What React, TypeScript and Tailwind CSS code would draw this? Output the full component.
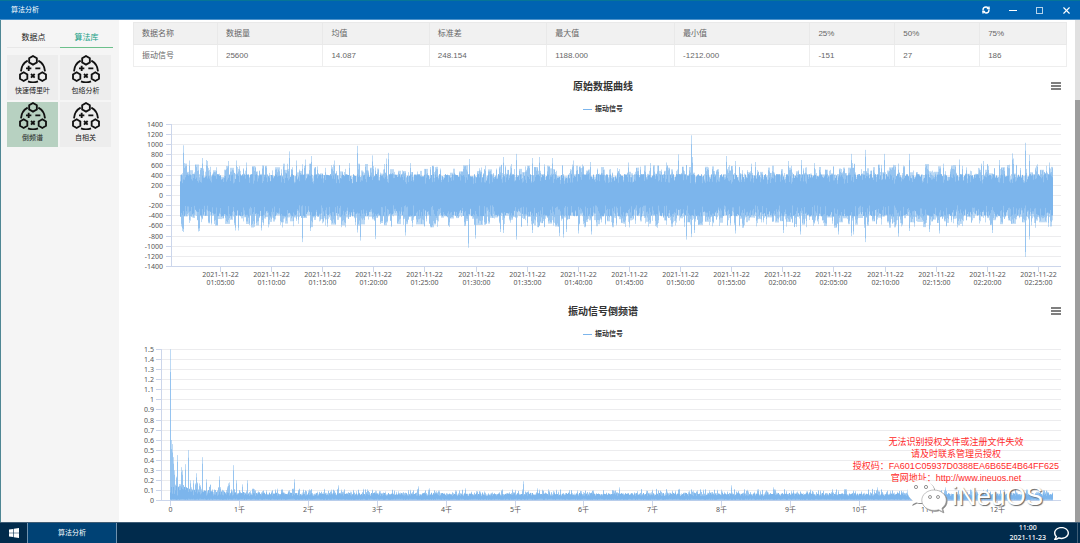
import { RefreshCw, X } from "lucide-react";
import { FaRegComment } from "react-icons/fa";

const tools = ["快速傅里叶", "包络分析", "倒频谱", "自相关"];

const stats = [
  { label: "数据名称", value: "振动信号", width: "w-[9%]" },
  { label: "数据量", value: "25600", width: "w-[11.3%]" },
  { label: "均值", value: "14.087", width: "w-[11.4%]" },
  { label: "标准差", value: "248.154", width: "w-[12.6%]" },
  { label: "最大值", value: "1188.000", width: "w-[13.7%]" },
  { label: "最小值", value: "-1212.000", width: "w-[14.5%]" },
  { label: "25%", value: "-151", width: "w-[9.1%]" },
  { label: "50%", value: "27", width: "w-[9.1%]" },
  { label: "75%", value: "186", width: "w-[9.3%]" },
];

type Peak = [number, number];

// x offset inside the plot, value
const highPeaks: Peak[] = [
  [50, 990], [51, 640], [56, 690], [69, 740], [73, 700], [74, 680], [95, 680], [103, 690], [113, 650],
  [156, 870], [163, 690], [172, 710], [178, 780], [201, 690], [216, 640], [224, 980], [239, 790],
  [253, 730], [255, 840], [277, 640], [336, 720], [370, 760], [383, 820], [399, 740], [406, 760],
  [419, 740], [440, 690], [457, 660], [495, 650], [517, 640], [533, 650], [545, 810], [558, 1188],
  [559, 760], [593, 780], [602, 680], [622, 660], [655, 680], [668, 700], [681, 640], [718, 820],
  [719, 640], [732, 900], [751, 820], [776, 820], [826, 710], [850, 680], [866, 700], [879, 830],
  [880, 730], [892, 1040], [896, 800], [916, 650],
];

const lowPeaks: Peak[] = [
  [49, -700], [50, -720], [65, -710], [66, -700], [102, -690], [105, -690], [128, -690], [169, -920],
  [177, -700], [224, -730], [227, -890], [242, -860], [272, -790], [335, -1030], [342, -850],
  [367, -720], [370, -740], [383, -870], [399, -740], [426, -800], [430, -830], [433, -720],
  [445, -750], [458, -770], [553, -870], [558, -820], [561, -740], [602, -750], [650, -740],
  [667, -770], [705, -770], [718, -800], [720, -770], [732, -920], [765, -810], [776, -700],
  [796, -720], [806, -750], [859, -740], [892, -1212], [896, -870],
];

const cepstrumPeaks: Peak[] = [
  [37, 1.5], [38, 0.6], [39, 0.56], [40, 0.43], [41, 0.3], [44, 0.45], [48, 0.33], [49, 0.3],
  [52, 0.36], [55, 0.5], [57, 0.2], [60, 0.2], [63, 0.27], [66, 0.17], [69, 0.43], [73, 0.21],
  [86, 0.24], [95, 0.17], [96, 0.18], [100, 0.35], [103, 0.2], [109, 0.16], [114, 0.2], [161, 0.21],
  [205, 0.15], [285, 0.14], [296, 0.12], [332, 0.12], [390, 0.19], [404, 0.12], [486, 0.13],
  [598, 0.15], [640, 0.13], [744, 0.13], [812, 0.13],
];

function createRandom(seed: number) {
  let s = seed;
  return () => {
    s = (s * 1664525 + 1013904223) % 4294967296;
    return s / 4294967296;
  };
}

function buildSignal() {
  const rand = createRandom(25600);
  const y = (v: number) => (79.5 - v * 0.0507).toFixed(1);
  const up = new Map(highPeaks);
  const down = new Map(lowPeaks);
  let outer = "";
  let middle = "";
  let core = "";
  let top = 450;
  let bottom = -450;
  for (let x = 47; x < 920; x++) {
    // neighbouring columns share an extreme now and then, so the edge comes out in clumps
    if (rand() < 0.65) top = 370 + Math.pow(rand(), 1.6) * 260;
    if (rand() < 0.65) bottom = -390 - Math.pow(rand(), 1.6) * 250;
    const hi = up.get(x);
    const lo = down.get(x);
    outer += `M${x + 0.5} ${y(hi ?? top)}V${y(lo ?? bottom)}`;
    middle += `M${x + 0.5} ${y(hi ? hi * 0.85 : top - rand() * 130)}V${y(lo ? lo * 0.92 : bottom + rand() * 130)}`;
    core += `M${x + 0.5} ${y(420 - Math.pow(rand(), 2) * 190)}V${y(-410 + Math.pow(rand(), 2) * 220)}`;
  }
  return { outer, middle, core };
}

function buildCepstrum() {
  const rand = createRandom(77);
  const y = (v: number) => (159.5 - v * 100.8).toFixed(1);
  const peaks = new Map(cepstrumPeaks);
  let outer = "";
  let middle = "";
  let core = "";
  for (let x = 37; x < 920; x++) {
    const decay = Math.exp(-(x - 37) / 32);
    const top = 0.06 + 0.1 * decay + Math.pow(rand(), 2.5) * (0.055 + 0.07 * decay);
    const peak = peaks.get(x);
    outer += `M${x + 0.5} ${y(peak ?? top)}V${y(0)}`;
    middle += `M${x + 0.5} ${y(peak ? peak * 0.85 : top - rand() * 0.02)}V${y(0.005)}`;
    core += `M${x + 0.5} ${y(0.045 + (0.03 + 0.1 * decay) * rand())}V${y(0.008 + rand() * 0.01)}`;
  }
  return { outer, middle, core };
}

const signal = buildSignal();
const cepstrum = buildCepstrum();

function ToolIcon() {
  return (
    <svg viewBox="0 0 84 84" className="size-7" fill="none" stroke="#111" strokeWidth="5.500">
      <path d="M42 3 53.500 9.500v13L42 29 30.500 22.500v-13z" />
      <path d="M14 52 25 58.500v13L14 78 3 71.500v-13z" />
      <path d="M70 52 81 58.500v13L70 78 59 71.500v-13z" />
      <path d="M26 17C13 24 7 35 6 49M58 17c13 7 19 18 20 32M27 79c10 4 20 4 30 0" />
      <path d="M21 40h16M29 32v16M49 40h15M36 57l11 11M47 57 36 68" />
    </svg>
  );
}

function WaveLayers({ data }: { data: { outer: string; middle: string; core: string } }) {
  return (
    <g stroke="#7cb5ec" fill="none">
      <path d={data.outer} strokeOpacity="0.5" />
      <path d={data.middle} strokeOpacity="0.6" />
      <path d={data.core} />
    </g>
  );
}

function ChartHeader({ title }: { title: string }) {
  return (
    <>
      <div className="grid grid-cols-[1fr_auto_1fr] items-center h-8 pr-3">
        <h2 className="col-start-2 pl-3 text-[10px] leading-4 font-bold text-[#333]">{title}</h2>
        <button type="button" aria-label="图表菜单" className="justify-self-end">
          <svg viewBox="0 0 10 8" className="w-[10px] h-2" stroke="#555" strokeWidth="1.600">
            <path d="M0 1h10M0 4h10M0 7h10" />
          </svg>
        </button>
      </div>
      <div className="flex justify-center h-[14px]">
        <button type="button" className="flex items-center gap-[3px] text-[7px] leading-3 font-bold text-[#333]">
          <span className="w-[9px] h-px bg-[#7cb5ec]" />
          振动信号
        </button>
      </div>
    </>
  );
}

function SignalChart() {
  const rows = Array.from({ length: 15 }, (_, i) => 1400 - i * 200);
  const times = Array.from({ length: 17 }, (_, i) => {
    const total = 65 + i * 5;
    return `0${Math.floor(total / 60)}:${String(total % 60).padStart(2, "0")}:00`;
  });
  return (
    <section>
      <ChartHeader title="原始数据曲线" />
      <svg viewBox="0 0 940 179" className="block w-full" fontSize="7" fill="#555">
        {rows.map((v, i) => {
          const y = Math.round(8 + i * 10.14) + 0.5;
          return (
            <g key={v}>
              <path d={`M38 ${y}H928`} stroke="#ececee" />
              <path d={`M33 ${y}h5`} stroke="#ccd6eb" />
              <text x="30" y={y + 2.5} textAnchor="end">{v}</text>
            </g>
          );
        })}
        <path d="M38.500 8v143M38 150.500H928" stroke="#ccd6eb" fill="none" />
        <WaveLayers data={signal} />
        {times.map((t, i) => {
          const x = Math.round(87 + i * 51.12) + 0.5;
          return (
            <g key={t} textAnchor="middle">
              <path d={`M${x} 151v5`} stroke="#ccd6eb" />
              <text x={x} y="161">2021-11-22</text>
              <text x={x} y="169">{t}</text>
            </g>
          );
        })}
      </svg>
    </section>
  );
}

function CepstrumChart() {
  const rows = Array.from({ length: 16 }, (_, i) => (15 - i) / 10);
  const ticks = Array.from({ length: 13 }, (_, i) => (i === 0 ? "0" : `${i}千`));
  return (
    <section>
      <ChartHeader title="振动信号倒频谱" />
      <svg viewBox="0 0 940 179" className="block w-full" fontSize="7" fill="#555">
        {rows.map((v, i) => {
          const y = Math.round(8 + i * 10.08) + 0.5;
          return (
            <g key={v}>
              <path d={`M28 ${y}H928`} stroke="#ececee" />
              <path d={`M23 ${y}h5`} stroke="#ccd6eb" />
              <text x="21" y={y + 2.5} textAnchor="end">{v}</text>
            </g>
          );
        })}
        <path d="M28.500 8v152M28 159.500H928" stroke="#ccd6eb" fill="none" />
        <WaveLayers data={cepstrum} />
        {ticks.map((t, i) => {
          const x = Math.round(37 + i * 68.9) + 0.5;
          return (
            <g key={t} textAnchor="middle">
              <path d={`M${x} 160v5`} stroke="#ccd6eb" />
              <text x={x} y="171">{t}</text>
            </g>
          );
        })}
      </svg>
    </section>
  );
}

function StatsTable() {
  return (
    <table className="w-full table-fixed border-collapse text-[8px] leading-3 text-[#666]">
      <thead>
        <tr className="bg-[#f1f1f1]">
          {stats.map((s) => (
            <th key={s.label} className={`${s.width} h-[22px] px-2 text-left font-normal border border-[#e9e9e9]`}>
              {s.label}
            </th>
          ))}
        </tr>
      </thead>
      <tbody>
        <tr>
          {stats.map((s) => (
            <td key={s.label} className="h-[22px] px-2 border border-[#eee]">{s.value}</td>
          ))}
        </tr>
      </tbody>
    </table>
  );
}

function TitleBar() {
  return (
    <header className="flex items-center justify-between h-5 shrink-0 pl-[11px] bg-[#0063b1] border-t border-t-[#067596] border-b border-b-[#4d92ca] text-white">
      <h1 className="text-[7px] leading-3">算法分析</h1>
      <div className="flex">
        <button type="button" aria-label="刷新" className="flex justify-center items-center w-[27px] h-4">
          <RefreshCw className="size-2" strokeWidth={4} />
        </button>
        <button type="button" aria-label="最小化" className="flex justify-center items-center w-[27px] h-4">
          <span className="w-2 h-px bg-white" />
        </button>
        <button type="button" aria-label="最大化" className="flex justify-center items-center w-[27px] h-4">
          <span className="size-[7px] border border-[#b5d3ea]" />
        </button>
        <button type="button" aria-label="关闭" className="flex justify-center items-center w-[27px] h-4">
          <X className="size-[11px]" strokeWidth={2.5} />
        </button>
      </div>
    </header>
  );
}

function Sidebar() {
  return (
    <aside className="w-[118px] shrink-0 pl-[6px] pr-[6px] pt-2 bg-[#f5f5f5]">
      <div className="grid grid-cols-2 text-[8px] leading-4">
        <button type="button" className="h-5 text-[#222] border-b border-[#e8e8e8]">数据点</button>
        <button type="button" className="h-5 text-[#16a085] border-b border-[#6cc08b]">算法库</button>
      </div>
      <div className="grid grid-cols-[51px_51px] gap-[2px] pt-[7px]">
        {tools.map((name) => (
          <button
            key={name}
            type="button"
            className={`flex flex-col items-center h-[45px] text-[7px] leading-4 text-[#222] ${
              name === "倒频谱" ? "bg-[#b7d1c1]" : "bg-[#ededed]"
            }`}
          >
            <ToolIcon />
            {name}
          </button>
        ))}
      </div>
    </aside>
  );
}

function LicenseNotice() {
  return (
    <div className="absolute right-4 bottom-[38px] text-center text-[9px] leading-3 text-[#ff2a2a]">
      <p>无法识别授权文件或注册文件失效</p>
      <p>请及时联系管理员授权</p>
      <p>授权码：FA601C05937D0388EA6B65E4B64FF625</p>
      <p>官网地址：<a href="http://www.ineuos.net">http://www.ineuos.net</a></p>
    </div>
  );
}

function Watermark() {
  return (
    <div className="absolute right-8 bottom-2 flex items-center gap-1">
      <svg viewBox="0 0 42 36" className="w-[42px] h-9 drop-shadow-[1px_1px_0px_#888]" fill="#fff">
        <path d="M15 2C7.500 2 1.500 7 1.500 13.500c0 3.600 2 6.700 5 8.900L5.200 27l5-2.600c1.500.4 3.100.6 4.800.6 7.500 0 13.500-5 13.500-11.500S22.500 2 15 2z" />
        <path d="M28 12c6.800 0 12.200 4.500 12.200 10.200 0 3.200-1.700 5.900-4.300 7.800l1 3.900-4.300-2.200c-1.400.5-3 .7-4.600.7-6.700 0-12.200-4.600-12.200-10.200S21.300 12 28 12z" stroke="#999" strokeWidth=".6" />
        <g fill="#fff" stroke="#888" strokeWidth=".9">
          <circle cx="10" cy="9" r="1.600" />
          <circle cx="20" cy="9" r="1.600" />
          <circle cx="24" cy="19" r="1.500" />
          <circle cx="32" cy="19" r="1.500" />
        </g>
      </svg>
      <span className="text-[26px] leading-8 text-white [text-shadow:1px_1px_1px_#666]">iNeuOS</span>
    </div>
  );
}

function TaskBar() {
  return (
    <footer className="flex h-[21px] shrink-0 bg-[#012b4c] border-t border-[#3f5d76] text-white text-[7px]">
      <button type="button" aria-label="开始" className="flex items-center justify-center w-[27px]">
        <svg viewBox="0 0 10 10" className="size-[10px]" fill="#fff">
          <path d="M0 1.500 4.200.9v3.800H0zM4.800.8 10 0v4.700H4.800zM0 5.300h4.200v3.800L0 8.500zM4.800 5.300H10V10l-5.200-.8z" />
        </svg>
      </button>
      <button type="button" className="w-[90px] bg-[#004275] border-x border-[#6f91ad]">算法分析</button>
      <div className="flex flex-1 items-center justify-end gap-2 pr-2 mr-[2px] border-r border-[#3f5d76]">
        <time className="text-center leading-[10px] font-medium">
          11:00
          <br />
          2021-11-23
        </time>
        <button type="button" aria-label="消息">
          <FaRegComment className="size-[15px]" />
        </button>
      </div>
    </footer>
  );
}

export default function App() {
  return (
    <div className="flex flex-col h-screen overflow-hidden bg-white font-['Noto_Sans','Noto_Sans_CJK_SC',sans-serif]">
      <TitleBar />
      <div className="flex flex-1 min-h-0 border-l border-[#4f8794] font-['Liberation_Sans','Noto_Sans_CJK_SC',sans-serif]">
        <Sidebar />
        <main className="relative flex-1 min-w-0 overflow-hidden">
          <div className="pt-[2px] pl-[14px] pr-2 pb-[3px]">
            <StatsTable />
          </div>
          <div className="pl-[14px] pr-[2px] font-['Noto_Sans','Noto_Sans_CJK_SC',sans-serif]">
            <SignalChart />
            <CepstrumChart />
          </div>
          <LicenseNotice />
          <Watermark />
        </main>
        <div className="w-[5px] pt-20 bg-[#e1e1e1]">
          <div className="h-full bg-[#9d9d9d]" />
        </div>
      </div>
      <TaskBar />
    </div>
  );
}
